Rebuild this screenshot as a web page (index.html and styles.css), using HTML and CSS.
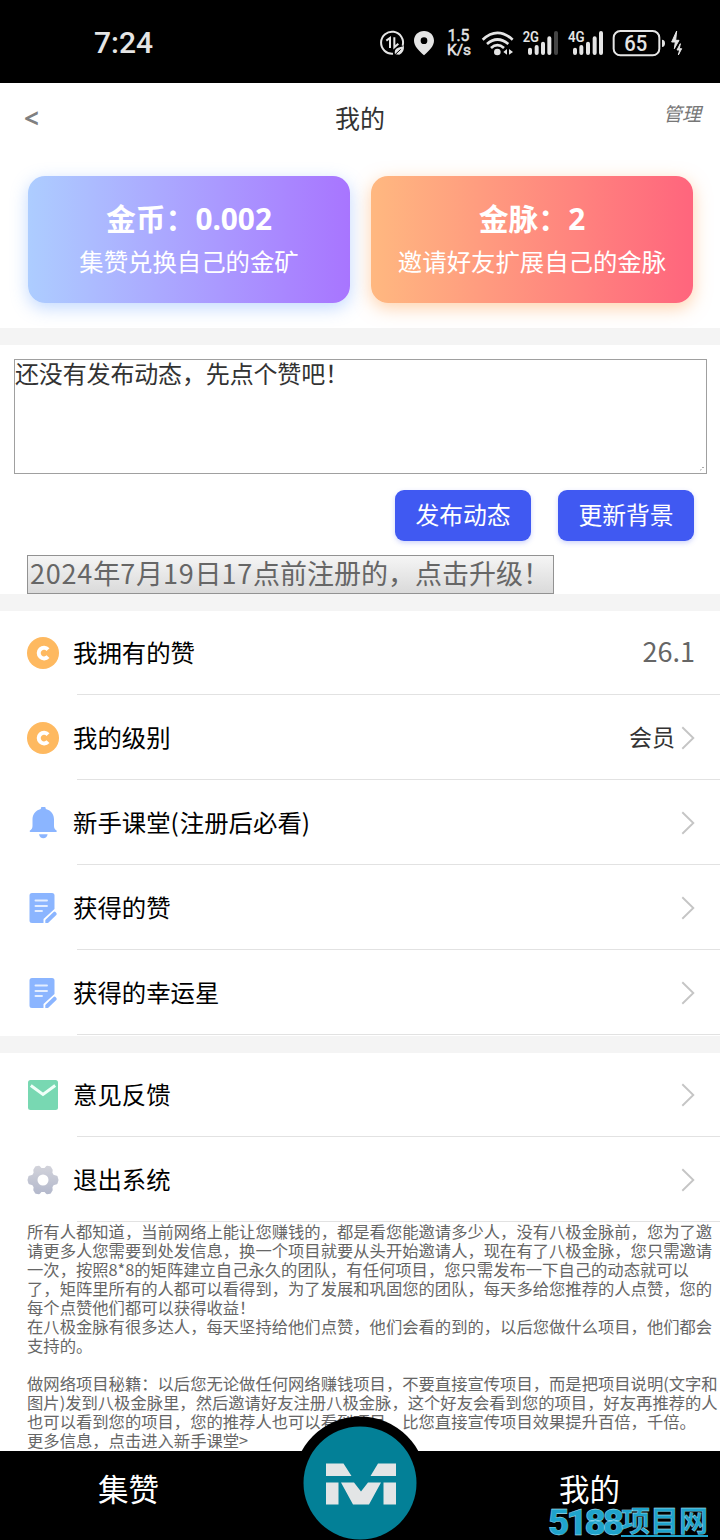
FILE: index.html
```html
<!DOCTYPE html>
<html lang="zh-CN">
<head>
<meta charset="utf-8">
<title>我的</title>
<link rel="stylesheet" href="styles.css">
</head>
<body>
<svg class="sprite" aria-hidden="true">
  <symbol id="coin" viewBox="0 0 32 32"><circle cx="16" cy="16" r="16" fill="#feb960"/><path d="M21 12.600A5.300 5.300 0 1 0 21 19.600" fill="none" stroke="#fff" stroke-width="4"/></symbol>
  <symbol id="bell" viewBox="0 0 32 32"><path d="M13.800 2a2.500 2.500 0 0 1 5 0C24.500 3.500 27 7.500 27 12.500v6.500c0 2.500 1 3.500 2.500 4.500.6.500.3 1.500-.5 1.500H3.500c-.8 0-1.100-1-.5-1.500 1.500-1 2.500-2 2.500-4.500v-6.500c0-5 2.700-9 8.300-10.500z" fill="#8bb5ff"/><path d="M12 27.200h8.600c-.5 2.400-2 4-4.300 4s-3.800-1.600-4.300-4z" fill="#8bb5ff"/></symbol>
  <symbol id="note" viewBox="0 0 32 32"><path d="M5 1h20a2.500 2.500 0 0 1 2.500 2.500V17L16.500 27V31H5a2.500 2.500 0 0 1-2.500-2.500v-25A2.500 2.500 0 0 1 5 1z" fill="#8bb5ff"/><path d="M8.500 8.500H20M8.500 14H20M8.500 19H15" stroke="#e4eeff" stroke-width="1.900" stroke-linecap="round"/><path d="M18.300 31v-3.100l8.300-7.900q1-.8 1.900 0l.9 1q.8 1-.1 1.900L21 31z" fill="#8bb5ff"/></symbol>
  <symbol id="mail" viewBox="0 0 32 32"><rect x="1" y="1" width="30" height="30" rx="2.500" fill="#78d8b2"/><path d="M3.800 6.500L16 15.500 28.200 6.500" fill="none" stroke="#f0fff8" stroke-width="3"/></symbol>
  <symbol id="gear" viewBox="0 0 32 32"><defs><linearGradient id="steel" x2="0" y2="1"><stop stop-color="#d1d2da"/><stop offset="1" stop-color="#b4b9cc"/></linearGradient></defs><path fill="url(#steel)" stroke="url(#steel)" stroke-width="2.400" stroke-linejoin="round" fill-rule="evenodd" d="M9 3.500L12 3 14 5.200H18L20 3 23 3.500 24.500 6 24.200 9 26 12 29.500 13 30.300 16 29.500 19 26 20 24.200 23 24.500 26 23 28.500 20 29 18 26.800H14L12 29 9 28.500 7.500 26 7.800 23 6 20 2.500 19 1.700 16 2.500 13 6 12 7.800 9 7.500 6ZM16 9.300a6.700 6.700 0 1 1 0 13.400 6.700 6.700 0 1 1 0-13.400z"/></symbol>
  <symbol id="chevron" viewBox="0 0 14 24"><path d="M1.300 1.300L12.300 12 1.300 22.700" fill="none" stroke="#c5c5c5" stroke-width="1.900"/></symbol>
</svg>

<div class="statusbar">
  <span class="clock">7:24</span>
  <svg class="status-icons" viewBox="0 0 1080 249" fill="#e5e5e5">
    <path d="M128 137A33 33 0 1 0 99 161" fill="none" stroke="#e5e5e5" stroke-width="6"/>
    <path d="M79 122L90 114V144M103 112V142L115 131" fill="none" stroke="#e5e5e5" stroke-width="6"/>
    <path d="M105 163Q101 148 114 143L132 138Q133 158 118 164Z"/>
    <path d="M104 165L122 148" stroke="#000" stroke-width="3"/>
    <path fill-rule="evenodd" d="M192 93C174 93 162 106 162 122C162 139 178 153 192 166C206 153 222 139 222 122C222 106 210 93 192 93ZM192 112a10 10 0 1 1 0 20a10 10 0 1 1 0-20z"/>
    <g stroke="#e5e5e5" stroke-width="1.500"><text x="263" y="122" font-size="48" textLength="65" lengthAdjust="spacingAndGlyphs">1.5</text>
    <text x="261" y="165" font-size="46" textLength="72" lengthAdjust="spacingAndGlyphs">K/s</text></g>
    <g fill="none" stroke="#e5e5e5" stroke-width="8"><path d="M368 119Q412 78 458 119"/><path d="M381 132Q412 105 445 132"/><path d="M393 144Q412 127 432 144"/></g>
    <circle cx="412" cy="156" r="10"/><path d="M441 147v17l-11-8zM447 147v17l12-8z"/>
    <text x="488" y="127" font-size="46" font-weight="600" textLength="49" lengthAdjust="spacingAndGlyphs">2G</text>
    <g stroke="#e5e5e5" stroke-width="12" stroke-linecap="round"><path d="M510 149v10M530 141v18M549 131v28M568 115v44"/><path d="M588 99v60" stroke="#454545"/><path d="M645 149v10M664 141v18M684 131v28M704 115v44M723 99v60"/></g>
    <text x="624" y="127" font-size="46" font-weight="600" textLength="50" lengthAdjust="spacingAndGlyphs">4G</text>
    <rect x="761" y="93" width="137" height="73" rx="20" fill="none" stroke="#e5e5e5" stroke-width="6"/>
    <text x="793" y="152" font-size="66" font-weight="500" textLength="69" lengthAdjust="spacingAndGlyphs">65</text>
    <path d="M906 119q9 0 9 11t-9 11z"/>
    <path stroke="#e5e5e5" stroke-width="3" stroke-linejoin="round" d="M950 93L935 126h11l-3 20 14-25h-10zM961 131l-10 19h8l-4 15 10-19h-7z"/>
  </svg>
</div>

<main class="page">
  <header class="topbar">
    <span class="back">&lt;</span>
    <h1 class="title">我的</h1>
    <em class="manage">管理</em>
  </header>

  <section class="cards">
    <div class="card card-coin"><strong>金币：<span class="amount">0.002</span></strong><span>集赞兑换自己的金矿</span></div>
    <div class="card card-vein"><strong>金脉：<span class="amount">2</span></strong><span>邀请好友扩展自己的金脉</span></div>
  </section>
  <div class="band"></div>

  <section class="compose">
    <div class="editor">还没有发布动态，先点个赞吧！<svg class="grip" viewBox="0 0 4 4"><path d="M0 3.500L1 2.500M2.500 1L3.500 0" stroke="#555"/></svg></div>
    <div class="actions"><span class="btn">发布动态</span><span class="btn">更新背景</span></div>
    <div class="upgrade"><span class="num">2024</span>年<span class="num">7</span>月<span class="num">19</span>日<span class="num">17</span>点前注册的，点击升级！</div>
  </section>
  <div class="band"></div>

  <section class="list">
    <div class="row"><svg class="icon"><use href="#coin"/></svg><span class="label">我拥有的赞</span><span class="value">26.1</span></div>
    <div class="row"><svg class="icon"><use href="#coin"/></svg><span class="label">我的级别</span><span class="level">会员</span><svg class="chev"><use href="#chevron"/></svg></div>
    <div class="row"><svg class="icon"><use href="#bell"/></svg><span class="label">新手课堂<span class="paren">(</span>注册后必看<span class="paren">)</span></span><svg class="chev"><use href="#chevron"/></svg></div>
    <div class="row"><svg class="icon"><use href="#note"/></svg><span class="label">获得的赞</span><svg class="chev"><use href="#chevron"/></svg></div>
    <div class="row"><svg class="icon"><use href="#note"/></svg><span class="label">获得的幸运星</span><svg class="chev"><use href="#chevron"/></svg></div>
  </section>
  <div class="band"></div>
  <section class="list">
    <div class="row"><svg class="icon"><use href="#mail"/></svg><span class="label">意见反馈</span><svg class="chev"><use href="#chevron"/></svg></div>
    <div class="row"><svg class="icon"><use href="#gear"/></svg><span class="label">退出系统</span><svg class="chev"><use href="#chevron"/></svg></div>
  </section>

  <div class="notes">所有人都知道，当前网络上能让您赚钱的，都是看您能邀请多少人，没有八极金脉前，您为了邀<br>请更多人您需要到处发信息，换一个项目就要从头开始邀请人，现在有了八极金脉，您只需邀请<br>一次，按照8*8的矩阵建立自己永久的团队，有任何项目，您只需发布一下自己的动态就可以<br>了，矩阵里所有的人都可以看得到，为了发展和巩固您的团队，每天多给您推荐的人点赞，您的<br>每个点赞他们都可以获得收益！<br>在八极金脉有很多达人，每天坚持给他们点赞，他们会看的到的，以后您做什么项目，他们都会<br>支持的。<br><br>做网络项目秘籍：以后您无论做任何网络赚钱项目，不要直接宣传项目，而是把项目说明(文字和<br>图片)发到八极金脉里，然后邀请好友注册八极金脉，这个好友会看到您的项目，好友再推荐的人<br>也可以看到您的项目，您的推荐人也可以看到项目，比您直接宣传项目效果提升百倍，千倍。<br>更多信息，点击进入新手课堂&gt;</div>
</main>

<nav class="tabbar">
  <span class="tab">集赞</span>
  <span class="tab">我的</span>
  <svg class="logo" viewBox="0 0 134 134"><circle cx="67" cy="67" r="66.500"/><circle cx="67" cy="67" r="56.500" fill="#038097"/><path fill="#e3e5e6" d="M33 47.500H50.500L58.500 60H33ZM85 47.500H103V60H77.500ZM33 66.500H45.500V88.500H33ZM90.500 66.500H103V88.500H90.500ZM48 66.500H61L68 75.500 75 66.500H88L76 88.500H60Z"/></svg>
  <div class="watermark"><span class="wm-num">5188</span><span class="wm-text">项目网</span></div>
</nav>
</body>
</html>
```

FILE: styles.css
```css
* { box-sizing: border-box; }
body {
  margin: 0;
  width: 720px;
  height: 1540px;
  overflow: hidden;
  display: flex;
  flex-direction: column;
  background: #fff;
  font-family: "Noto Sans CJK SC", sans-serif;
  color: #333;
}
.sprite { position: absolute; width: 0; height: 0; }

.statusbar {
  height: 83px;
  flex: none;
  display: flex;
  justify-content: space-between;
  background: #000;
  color: #e5e5e5;
  font-family: Roboto, sans-serif;
}
.clock { padding-left: 94px; font-size: 30px; font-weight: 500; line-height: 86px; }
.status-icons { width: 360px; height: 83px; }

.page { height: 1368px; flex: none; overflow: hidden; }

.topbar {
  height: 93px;
  padding: 0 19px 0 19px;
  display: grid;
  grid-template-columns: 1fr auto 1fr;
}
.back { padding-left: 5px; font: bold 26px/70px "Noto Sans", sans-serif; color: #808080; }
.title { margin: 0; font-size: 25px; font-weight: 400; line-height: 69px; }
.manage { justify-self: end; font-size: 19px; line-height: 60px; color: #777; }

.cards { height: 152px; padding: 0 27px 0 28px; display: flex; gap: 21px; }
.card {
  width: 322px;
  height: 127px;
  border-radius: 17px;
  display: flex;
  flex-direction: column;
  align-items: center;
  padding-top: 20px;
  color: #fff;
  font-size: 24.4px;
  line-height: 41px;
}
.card strong { font-size: 29.8px; line-height: 42px; }
.amount { font-family: "Noto Sans", sans-serif; }
.card-coin { background: linear-gradient(90deg, #adcdff, #a875ff); box-shadow: 0 5px 17px rgba(120, 170, 255, .45); }
.card-vein { background: linear-gradient(90deg, #ffb880, #ff657d); box-shadow: 0 5px 17px rgba(255, 165, 90, .5); }

.band { height: 17px; background: #f4f4f4; }

.compose { height: 249px; padding: 14px 13px 0 14px; }
.editor {
  position: relative;
  height: 115px;
  border: 1px solid #a0a0a0;
  font-size: 24px;
  line-height: 26px;
  letter-spacing: -.15px;
}
.grip { position: absolute; right: 2px; bottom: 2px; width: 4px; height: 4px; }
.actions { display: flex; justify-content: flex-end; gap: 27px; padding: 16px 13px 14px 0; }
.btn {
  width: 136px;
  height: 51px;
  border-radius: 9px;
  background: #4059f2;
  box-shadow: 0 2px 5px rgba(64, 89, 242, .25);
  color: #fff;
  font-size: 23.8px;
  line-height: 47px;
  text-align: center;
}
.upgrade {
  width: 527px;
  height: 39px;
  margin-left: 13px;
  padding-left: 2px;
  border: 1px solid #929292;
  background: linear-gradient(#f5f5f5, #dadada);
  color: #666;
  font-size: 27px;
  line-height: 33px;
  white-space: nowrap;
}
.num { letter-spacing: .8px; }

.row {
  height: 85px;
  padding: 0 25px 0 27px;
  display: flex;
  align-items: center;
  border-bottom: 1px solid transparent;
  background: linear-gradient(#e2e2e2, #e2e2e2) 77px 83px / 643px 1px no-repeat;
}
.icon { width: 32px; height: 32px; margin-right: 14px; }
.label { flex: 1; height: 84px; font-size: 24.4px; color: #000; line-height: 82px; }
.paren { letter-spacing: 1px; }
.value { height: 84px; font-size: 27px; color: #666; line-height: 80px; }
.level { height: 84px; font-size: 23px; line-height: 80px; margin-right: 6px; }
.chev { width: 14px; height: 24px; }
.notes {
  margin-top: -1px;
  padding-left: 27px;
  font-size: 16.32px;
  line-height: 19px;
  color: #666;
  white-space: nowrap;
}

.tabbar {
  position: relative;
  height: 89px;
  flex: none;
  display: flex;
  justify-content: space-between;
  padding: 0 100px 0 98px;
  background: #000;
}
.tab { color: #fff; font-size: 30.5px; line-height: 75px; }
.logo { position: absolute; left: 293px; top: -35px; width: 134px; height: 134px; }
.watermark {
  position: absolute;
  left: 548px;
  top: 55px;
  height: 33px;
  display: flex;
  color: #1fa3cc;
  white-space: nowrap;
  -webkit-text-stroke: .3px #c8f2ff;
}
.wm-num { width: 73px; font: 900 37px/33px Roboto, sans-serif; letter-spacing: -3.200px; }
.wm-text { height: 31px; font-size: 29px; font-weight: 700; line-height: 27px; border-bottom: 2px solid #1fa3cc; }
```
